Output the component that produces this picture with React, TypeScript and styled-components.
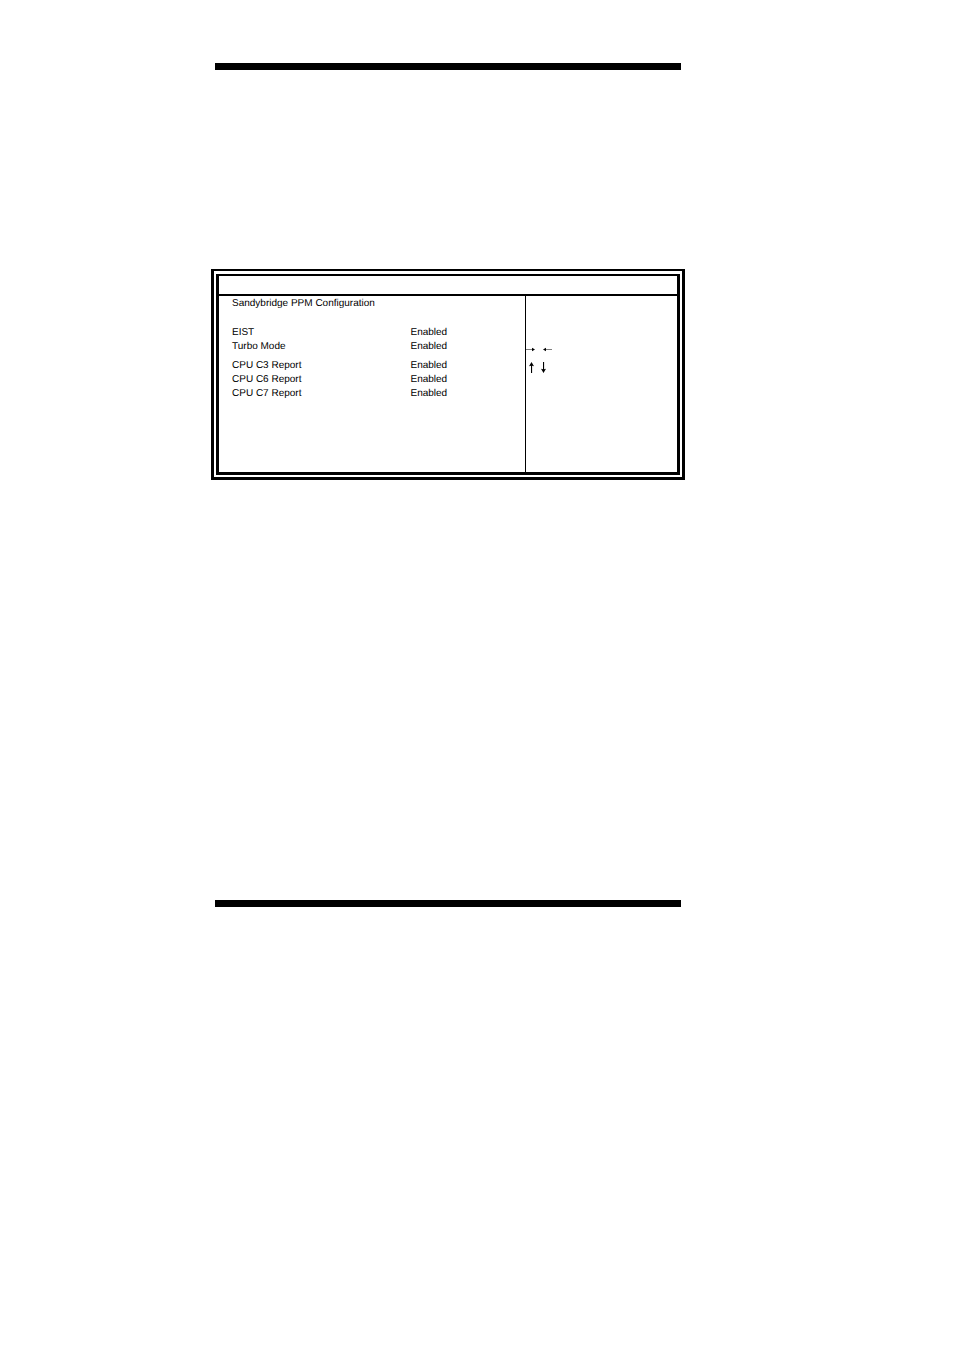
import React from "react";
import styled, { createGlobalStyle } from "styled-components";

const GlobalStyle = createGlobalStyle`
  body {
    margin: 0;
    background: #fff;
    color: #000;
    font-family: "Liberation Sans", Arial, sans-serif;
    font-size: 10px;
    line-height: 14px;
  }
`;

const Page = styled.main`
  display: grid;
  grid-template-columns: 215fr 466fr 273fr;
  padding: 63px 0;
`;

const Sheet = styled.div`
  grid-column: 2;
  min-width: 0;
`;

const Rule = styled.hr`
  height: 7px;
  margin: 0;
  border: 0;
  background: #000;
`;

const Frame = styled.section`
  margin: 199px -4px 420px;
  padding: 3px 2px 2px;
  border: 3px solid #000;
  border-top-width: 2px;
`;

const Screen = styled.div`
  border: 3px solid #000;
  border-top-width: 2px;
`;

const TitleBar = styled.header`
  height: 18px;
  border-bottom: 2px solid #000;
`;

const Columns = styled.div`
  display: grid;
  grid-template-columns: 306fr 152fr;
  min-height: 176px;
`;

const Settings = styled.table`
  align-self: start;
  width: 100%;
  table-layout: fixed;
  border-collapse: collapse;
  text-align: left;
  text-rendering: geometricPrecision;

  caption {
    padding: 1px 0 14px 13px;
    text-align: left;
  }

  th {
    width: 58%;
    padding: 0 0 0 13px;
    font-weight: 400;
  }

  td {
    padding: 0 0 0 1px;
  }
`;

const SettingRow = styled.tr<{ $spaced?: boolean }>`
  height: ${(p) => (p.$spaced ? 19 : 14)}px;
  vertical-align: bottom;

  &:first-child {
    height: 15px;
  }
`;

const Keys = styled.aside`
  display: flex;
  flex-direction: column;
  gap: 10px;
  padding-top: 51px;
  border-left: 1px solid #000;
`;

const KeyRow = styled.div<{ $gap: number; $indent: number }>`
  display: flex;
  gap: ${(p) => p.$gap}px;
  padding-left: ${(p) => p.$indent}px;
`;

const Arrow = styled.svg`
  display: block;
  flex: none;
  fill: #000;
`;

const settings = [
  { name: "EIST", value: "Enabled" },
  { name: "Turbo Mode", value: "Enabled" },
  { name: "CPU C3 Report", value: "Enabled", spaced: true },
  { name: "CPU C6 Report", value: "Enabled" },
  { name: "CPU C7 Report", value: "Enabled" },
];

export default function App() {
  return (
    <>
      <GlobalStyle />
      <Page>
        <Sheet>
          <Rule />
          <Frame>
            <Screen>
              <TitleBar />
              <Columns>
                <Settings>
                  <caption>Sandybridge PPM Configuration</caption>
                  <tbody>
                    {settings.map((s) => (
                      <SettingRow key={s.name} $spaced={s.spaced}>
                        <th scope="row">{s.name}</th>
                        <td>{s.value}</td>
                      </SettingRow>
                    ))}
                  </tbody>
                </Settings>
                <Keys>
                  <KeyRow $gap={8} $indent={0}>
                    <Arrow width="9" height="5" role="img" aria-label="Right">
                      <path d="M0 2.2H6V0.7L9 2.5L6 4.3V2.8H0Z" />
                    </Arrow>
                    <Arrow width="9" height="5" role="img" aria-label="Left">
                      <path d="M9 2.2H3V0.7L0 2.5L3 4.3V2.8H9Z" />
                    </Arrow>
                  </KeyRow>
                  <KeyRow $gap={7} $indent={3}>
                    <Arrow width="5" height="11" role="img" aria-label="Up">
                      <path d="M2.5 0L5 4.2L3.1 3.7V11H2V3.7L0 4.2Z" />
                    </Arrow>
                    <Arrow width="5" height="11" role="img" aria-label="Down">
                      <path d="M2.5 11L5 6.8L3.1 7.3V0H2V7.3L0 6.8Z" />
                    </Arrow>
                  </KeyRow>
                </Keys>
              </Columns>
            </Screen>
          </Frame>
          <Rule />
        </Sheet>
      </Page>
    </>
  );
}
